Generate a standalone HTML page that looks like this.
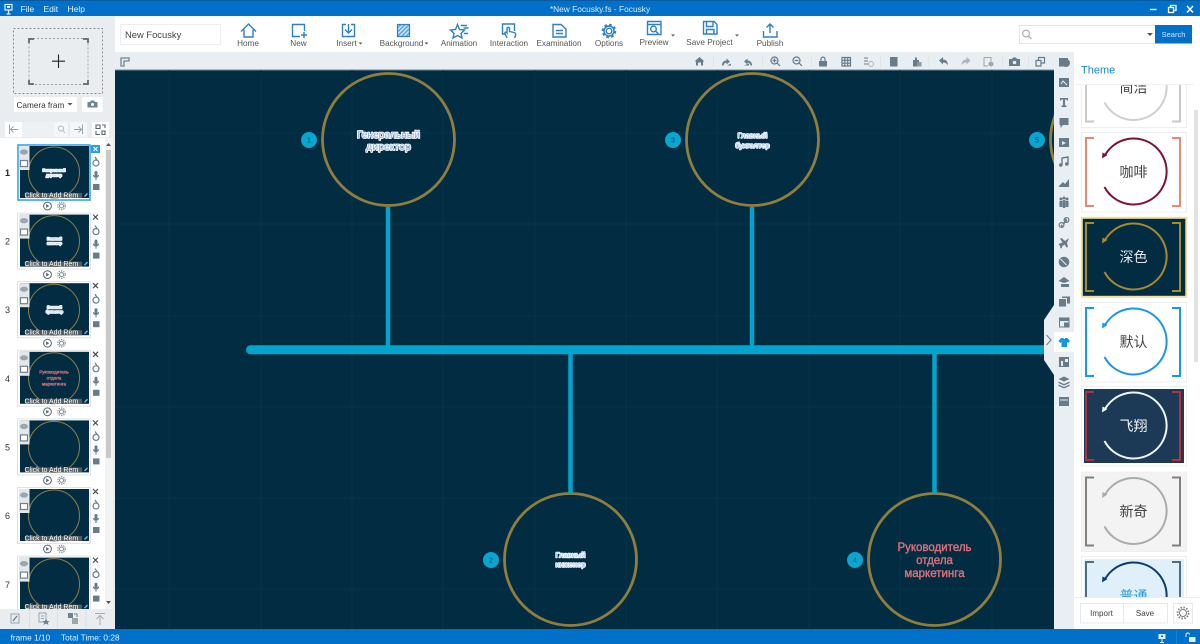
<!DOCTYPE html>
<html><head><meta charset="utf-8"><title>Focusky</title>
<style>
html,body{margin:0;padding:0;width:1200px;height:644px;overflow:hidden;background:#e9eef2}
svg{display:block;font-family:"Liberation Sans","Noto Sans CJK SC",sans-serif}
.tl{font-size:8.2px;fill:#555;text-anchor:middle}
.ti{fill:none;stroke:#2f80c6;stroke-width:1.4}
.g{fill:#677b88}
.gl{fill:#aab6be}
.gs{fill:none;stroke:#677b88;stroke-width:1.2}
.cam{fill:#fff;font-size:7px}
.hal{paint-order:stroke;stroke:#fff;stroke-width:1.8px;stroke-linejoin:round;fill:#86aade;text-anchor:middle}
.hals{paint-order:stroke;stroke:#fff;stroke-width:1.5px;stroke-linejoin:round;fill:#a8c4e8;text-anchor:middle}
.thal{paint-order:stroke;stroke:#fff;stroke-width:1.6px;stroke-linejoin:round;fill:#a8c4e8;text-anchor:middle;font-size:3.7px}
.ct{font-size:14px;text-anchor:middle;font-family:"Liberation Sans","Noto Sans CJK SC",sans-serif}
</style></head><body>
<svg width="1200" height="644" viewBox="0 0 1200 644" xmlns="http://www.w3.org/2000/svg">
<defs>
<pattern id="hatch" width="3" height="3" patternUnits="userSpaceOnUse" patternTransform="rotate(-45)"><rect width="3" height="3" fill="#cfe3f3"/><rect width="3" height="1.5" fill="#5fa5dc"/></pattern>
<clipPath id="listClip"><rect x="0" y="138" width="105" height="471"/></clipPath>
<clipPath id="panelClip"><rect x="1075" y="85" width="119" height="512"/></clipPath>
<clipPath id="canvasClip"><rect x="115" y="70" width="939" height="559"/></clipPath>
<g id="tb">
<rect x="17.500" y="144.500" width="73" height="56" fill="#fff" stroke="#e2e2e2"/>
<rect x="20" y="146" width="69" height="52" fill="#022c42"/>
<circle cx="54" cy="172.500" r="25.500" fill="none" stroke="#8d7f48" stroke-width="1"/>
<rect x="19" y="146" width="10.500" height="24" fill="#e3e7ea"/>
<ellipse cx="24" cy="152" rx="4" ry="2.600" fill="#98a6af"/>
<rect x="20.500" y="160.500" width="7" height="6" fill="#fff" stroke="#6f8290" stroke-width="1.200"/>
<rect x="25" y="193" width="57" height="5" fill="#555c60"/>
<path d="M84 196l3-3 1 1-3 3z" fill="#7fb7e0"/>
<path d="M93 146l5 5m0-5l-5 5" stroke="#444" stroke-width="1.100" fill="none"/>
<circle cx="96" cy="163" r="3" class="gs"/><path d="M95 157l2 3" class="gs"/>
<rect x="94.500" y="171" width="3" height="6" rx="1.500" class="g"/><path d="M93.500 175c0 3 5 3 5 0M96 178v2" class="gs"/>
<rect x="93" y="184" width="6.500" height="6" class="g"/>
<circle cx="47.500" cy="206" r="3.900" fill="none" stroke="#55666f" stroke-width="1"/><path d="M46.200 204v4l3-2z" fill="#55666f"/>
<circle cx="61.500" cy="206" r="2" fill="none" stroke="#7d8e98" stroke-width="1"/><circle cx="61.500" cy="206" r="3.700" fill="none" stroke="#7d8e98" stroke-width="1.200" stroke-dasharray="1.400 1"/>
</g>
<g id="br"><path d="M13 6H5V74H13M91 6H99V74H91" fill="none" stroke-width="2"/></g>
<g id="arc"><path d="M23.500 24A33 33 0 1 1 23.500 55" fill="none" stroke-width="2"/><path d="M21 26.500L21.500 20.500L26.500 23z" stroke="none"/></g>
</defs>

<!-- base -->
<rect width="1200" height="644" fill="#e9eef2"/>
<!-- title bar -->
<rect width="1200" height="16" fill="#0070c9"/>
<rect width="1200" height="1" fill="#0a5aa0"/>
<path d="M5 4.500H12V10H5zM8.500 10V14M6.500 14H10.500" fill="none" stroke="#e3f0fa" stroke-width="1.200"/>
<rect x="7" y="6" width="3" height="2" fill="#e3f0fa"/>
<text x="20.500" y="12" font-size="8.500" fill="#e8f3fb">File</text>
<text x="43.500" y="12" font-size="8.500" fill="#e8f3fb">Edit</text>
<text x="67.500" y="12" font-size="8.500" fill="#e8f3fb">Help</text>
<text x="600" y="12" font-size="8.400" fill="#dcebf7" text-anchor="middle">*New Focusky.fs - Focusky</text>
<path d="M1150 9.500H1156.500" stroke="#fff" stroke-width="1.400"/>
<path d="M1168.500 7.500h5v5h-5zM1170.500 7.500v-2h5.500v5h-2" fill="none" stroke="#fff" stroke-width="1.300"/>
<path d="M1187 6l6 6.500m0-6.500l-6 6.500" stroke="#fff" stroke-width="1.500" fill="none"/>

<!-- ribbon -->
<rect x="115" y="16" width="1085" height="36" fill="#fff"/>
<rect x="120.500" y="24.500" width="100" height="20" fill="#fff" stroke="#eceff1"/>
<text x="125" y="38" font-size="9.400" fill="#444">New Focusky</text>

<path class="ti" d="M241 31.500L248.500 24L256 31.500M244 29.500V37H253V29.500"/>
<text class="tl" x="248" y="46">Home</text>
<path class="ti" d="M304.500 31V24.500H292.500V36.500H300M301 35H307M304 32V38"/>
<text class="tl" x="298.500" y="46">New</text>
<path class="ti" d="M346 24.500H342.500V36.500H354.500V24.500H351M348.500 24V33M345 29.500L348.500 33L352 29.500"/>
<text class="tl" x="346.500" y="46">Insert</text><path d="M358.500 42.500h4l-2 2z" fill="#555"/>
<rect x="397.500" y="24.500" width="12" height="12" fill="url(#hatch)" stroke="#2f80c6" stroke-width="1.200"/>
<text class="tl" x="401.500" y="46">Background</text><path d="M424.500 42.500h4l-2 2z" fill="#555"/>
<path class="ti" d="M457.500 24.500L459.500 29.500L464.500 30L461 33.500L462 38L457.500 35.500L453 38L454 33.500L450.500 30L455.500 29.500zM461 25.500H467M463.500 28H468.500M464 33.500H468"/>
<text class="tl" x="459" y="46">Animation</text>
<path class="ti" d="M505 34H502.500V24H514.500V31M507 38L505 33.500C504.500 32 506 31.500 507 33V28.500C507 27 509.500 27 509.500 28.500V31.500L514 32.500C515.500 33 516 34 515.500 35.500L514.500 38"/>
<text class="tl" x="509" y="46">Interaction</text>
<path class="ti" d="M553 24.500H561L566 29V37H553zM556 30.500H563M556 33.500H563"/>
<text class="tl" x="559" y="46">Examination</text>
<circle class="ti" cx="609" cy="31" r="2.800"/><circle cx="609" cy="31" r="6" fill="none" stroke="#2f80c6" stroke-width="2.600" stroke-dasharray="2.500 2.200"/><circle cx="609" cy="31" r="5" class="ti" stroke-width="1"/>
<text class="tl" x="609" y="46">Options</text>
<path class="ti" d="M647.500 21.500H661V34.500H647.500zM647.500 24.500H661"/><circle class="ti" cx="653.500" cy="29" r="2.800"/><path class="ti" d="M655.500 31L658.500 34"/>
<text class="tl" x="654" y="45">Preview</text><path d="M671 34.500h4l-2 2z" fill="#555"/>
<path class="ti" d="M703.500 21.500H714L717 24.500V34H703.500zM706.500 21.500V26.500H713V21.500M706.500 34V29.500H714V34"/>
<text class="tl" x="709.500" y="45">Save Project</text><path d="M735 34.500h4l-2 2z" fill="#555"/>
<path class="ti" d="M770 33V24M766.500 27.500L770 24L773.500 27.500M763.500 31V37H777V31"/>
<text class="tl" x="770" y="46">Publish</text>

<!-- search -->
<rect x="1019.500" y="25.500" width="136" height="18" fill="#fff" stroke="#e2e5e8"/>
<circle cx="1026" cy="33.500" r="3.400" fill="none" stroke="#b0b0b0" stroke-width="1.200"/><path d="M1028.500 36L1031.500 39" stroke="#b0b0b0" stroke-width="1.400"/>
<path d="M1147 33h6l-3 3z" fill="#555"/>
<rect x="1155" y="25" width="37" height="18.500" fill="#0070c9"/>
<text x="1173.500" y="37" font-size="7.500" fill="#d6e8f6" text-anchor="middle">Search</text>

<!-- toolbar -->
<rect x="115" y="52" width="959" height="18" fill="#e9eef2"/>
<path d="M121 58H129V61H124V66H121z" fill="none" stroke="#71848f" stroke-width="1.300"/>
<path class="g" d="M699.500 57L704.500 61.500H703V65.500H701V62.500H698V65.500H696V61.500H694.500z"/>
<path class="g" d="M722 65.500C722 62 724 60.500 726.500 60.500V58.500L730 61.500L726.500 64.500V62.500C725 62.500 724 63.500 723.500 65.500zM727 65.500H731V63.500z"/>
<path class="g" d="M752 65.500C752 62 750 60.500 747.500 60.500V58.500L744 61.500L747.500 64.500V62.500C749 62.500 750 63.500 750.500 65.500zM744 65.500H749V63.500z"/>
<circle class="gs" cx="774.500" cy="60.500" r="3.500"/><path class="gs" d="M777 63L780 66M772.500 60.500H776.500M774.500 58.500V62.500"/>
<circle class="gs" cx="796.500" cy="60.500" r="3.500"/><path class="gs" d="M799 63L802 66M794.500 60.500H798.500"/>
<rect class="g" x="819" y="61" width="8" height="5.500" rx=".5"/><path class="gs" d="M821 61V59C821 56.500 825 56.500 825 59V61"/>
<path class="gs" d="M842 57.500H850.500V66H842zM842 60.300H850.500M842 63.200H850.500M844.800 57.500V66M847.700 57.500V66" stroke-width="1"/>
<path class="gl" d="M864 57h4v2h-4zM864 60h4v2h-4zM864 63h4v2h-4z"/><circle cx="871" cy="64" r="2.500" fill="none" stroke="#aab6be"/>
<path class="g" d="M890 57H897.500V66.500H890z"/>
<path class="g" d="M913 60H919V66.500H913zM915 57.500H917V60H915z"/><rect x="917" y="62" width="4.500" height="4.500" fill="#8b9ba5"/>
<path class="g" d="M939 60.500L943 57V59.500C946.500 59.500 948 62 948 65.500C947 63.500 945.500 62.500 943 62.500V64.500z"/>
<path class="gl" d="M970.500 60.500L966.500 57V59.500C963 59.500 961.500 62 961.500 65.500C962.500 63.500 964 62.500 966.500 62.500V64.500z"/>
<path fill="none" stroke="#9aa8b1" d="M984 57.500H991V61M984 57.500V66H988"/><circle cx="991" cy="64" r="2.500" fill="#9aa8b1"/>
<path class="g" d="M1009 59H1012L1013 57.500H1016L1017 59H1020V66H1009z"/><circle cx="1014.500" cy="62.500" r="1.800" fill="#e9eef2"/>
<path class="gs" d="M1036 60.500H1041V66H1036zM1038.500 60.500V57.500H1044.500V63H1041"/>
<path d="M713.500 55V67M762.500 55V67M811.500 55V67M880.500 55V67M929 55V67M1002.500 55V67M1028.500 55V67" stroke="#e0e5e9"/>

<!-- left panel -->
<rect x="0" y="16" width="115" height="613" fill="#e9edf0"/>
<rect x="13.500" y="28.500" width="89" height="65" fill="none" stroke="#8b8b8b" stroke-dasharray="2 2"/>
<rect x="29" y="38.500" width="59" height="46" fill="none" stroke="#a0a0a0" stroke-dasharray="2 2"/>
<path d="M29 43V39H34M83 39H88V43M88 80V84H83M34 84H29V80" fill="none" stroke="#666" stroke-width="1.800"/>
<path d="M58.500 54.500V68M52 61.200H65" stroke="#222" stroke-width="1.100"/>
<rect x="14" y="97" width="63" height="15" fill="#fff"/>
<text x="16.500" y="108" font-size="8.200" fill="#333">Camera fram</text>
<path d="M67.500 103h5l-2.500 2.500z" fill="#555"/>
<rect x="82" y="97" width="20.500" height="15" fill="#fff"/>
<path d="M87.500 102H90L91 100.500H94L95 102H97.500V107.500H87.500z" fill="#6c8493"/><circle cx="92.500" cy="104.500" r="1.500" fill="#fff"/>
<rect x="5" y="122" width="17" height="15" fill="#fff"/><rect x="22" y="122" width="32" height="15" fill="#eef1f3"/><rect x="54" y="122" width="14" height="15" fill="#f5f6f7"/><rect x="70" y="122" width="17" height="15" fill="#f5f6f7"/><rect x="92" y="122" width="17" height="15" fill="#fff"/>
<path d="M9.500 124.500V134M18 129.500H10.500M13.500 126.500L10.500 129.500L13.500 132.500" fill="none" stroke="#9aa5ac"/>
<circle cx="61" cy="128.500" r="2.500" fill="none" stroke="#b0b6bb"/><path d="M63 130.500L65 133" stroke="#b0b6bb"/>
<path d="M82.500 124.500V134M74 129.500H81.500M78.500 126.500L81.500 129.500L78.500 132.500" fill="none" stroke="#9aa5ac"/>
<path d="M96 125H100V128.500H96zM102 125H105V128M96 131V134.500H100M102 131H105V134.500H102z" fill="none" stroke="#55666f" stroke-width="1.100"/>

<!-- thumbnails list -->
<rect x="0" y="138" width="113" height="471" fill="#fff"/>
<rect x="105" y="138" width="8" height="471" fill="#f2f3f4"/>
<rect x="106" y="150" width="5" height="308" fill="#c9c9c9"/>
<path d="M106 146l2.500-3 2.500 3z" fill="#555"/><path d="M106 601l2.500 3 2.500-3z" fill="#555"/>
<g clip-path="url(#listClip)">
<use href="#tb"/>
<rect x="18" y="145" width="72" height="55" fill="none" stroke="#3aa8ee" stroke-width="1.600"/>
<rect x="91" y="145" width="9" height="8" fill="#2b9bea"/><path d="M93.500 147l4 4m0-4l-4 4" stroke="#fff" stroke-width="1.100"/>
<text class="thal" x="54" y="171.500">Генеральный</text><text class="thal" x="54" y="176.500">директор</text>
<text class="cam" x="24.500" y="197.500">Click to Add Rem</text>
<text x="5" y="176" font-size="9" font-weight="bold" fill="#222">1</text>

<use href="#tb" y="68.600"/>
<text class="thal" x="54.500" y="240">Главный</text><text class="thal" x="54.500" y="244.500">инженер</text>
<text class="cam" x="24.500" y="266">Click to Add Rem</text>
<text x="5" y="244.500" font-size="9" fill="#333">2</text>

<use href="#tb" y="137.200"/>
<text class="thal" x="54.500" y="308.500">Главный</text><text class="thal" x="54.500" y="313">бухгалтер</text>
<text class="cam" x="24.500" y="334.700">Click to Add Rem</text>
<text x="5" y="313" font-size="9" fill="#333">3</text>

<use href="#tb" y="205.800"/>
<g font-size="4.600" fill="#e0707c" stroke="#e0707c" stroke-width=".3" text-anchor="middle"><text x="54" y="373.500">Руководитель</text><text x="54" y="379.500">отдела</text><text x="54" y="385.500">маркетинга</text></g>
<text class="cam" x="24.500" y="403.300">Click to Add Rem</text>
<text x="5" y="382" font-size="9" fill="#333">4</text>

<use href="#tb" y="274.400"/>
<text class="cam" x="24.500" y="471.900">Click to Add Rem</text>
<text x="5" y="450.500" font-size="9" fill="#333">5</text>

<use href="#tb" y="343"/>
<text class="cam" x="24.500" y="540.500">Click to Add Rem</text>
<text x="5" y="519" font-size="9" fill="#333">6</text>

<use href="#tb" y="411.600"/>
<text class="cam" x="24.500" y="609">Click to Add Rem</text>
<text x="5" y="588" font-size="9" fill="#333">7</text>
</g>
<!-- left bottom bar -->
<rect x="0" y="609" width="115" height="20" fill="#e9edf0"/>
<path d="M29.500 609V629M57.500 609V629M86 609V629" stroke="#dadfe3"/>
<path d="M11 614H19V623H11z" fill="none" stroke="#9aa5ac"/><path d="M13 621L17 616" stroke="#677b88" stroke-width="1.300"/>
<path d="M39 613H46V622H39z" fill="none" stroke="#9aa5ac"/><path d="M41 616H44M41 618.500H44" stroke="#9aa5ac"/><path d="M46 618.500L47.200 621H49.500L47.800 622.600 48.500 625 46 623.600 43.500 625 44.200 622.600 42.500 621H44.800z" fill="#6f8290"/>
<rect x="68" y="613" width="5" height="5" fill="#6f8290"/><rect x="72" y="618" width="6" height="6" fill="#9aa5ac"/><path d="M74 614h3v3" fill="none" stroke="#6f8290"/>
<path d="M95 613.500H105M100 625V615M96.500 619L100 615.500L103.500 619" fill="none" stroke="#a3adb4"/>

<!-- canvas -->
<rect x="115" y="70" width="939" height="559" fill="#022c42"/>
<rect x="115" y="69.500" width="939" height="1" fill="#6c8997"/>
<g clip-path="url(#canvasClip)">
<path stroke="#06344a" stroke-width="1" d="M169 70V629M261 70V629M352 70V629M443 70V629M535 70V629M626 70V629M717 70V629M809 70V629M900 70V629M992 70V629M115 133H1054M115 224H1054M115 316H1054M115 407H1054M115 498H1054M115 589H1054"/>
<g fill="none" stroke="#8f7e3e" stroke-width="2.800">
<circle cx="388.500" cy="139.500" r="66"/><circle cx="752.500" cy="139.500" r="66"/><circle cx="1116.500" cy="139.500" r="66"/>
<circle cx="570.500" cy="559.500" r="66"/><circle cx="934.500" cy="559.500" r="66"/>
</g>
<path d="M388 207V350M752 207V350M570.500 350V493M934.500 350V493" stroke="#00a4cc" stroke-width="4.500"/>
<path d="M250.500 349.800H1060" stroke="#00a4cc" stroke-width="9" stroke-linecap="round"/>
<g fill="#0aa6d0"><circle cx="309" cy="140" r="8"/><circle cx="673" cy="140" r="8"/><circle cx="1037" cy="140" r="8"/><circle cx="491" cy="560" r="8"/><circle cx="855" cy="560" r="8"/></g>
<g font-size="7" fill="#0b4a66" text-anchor="middle"><text x="309" y="142.500">1</text><text x="673" y="142.500">3</text><text x="1037" y="142.500">5</text><text x="491" y="562.500">2</text><text x="855" y="562.500">4</text></g>
<text class="hal" x="388.500" y="138" font-size="10.500" textLength="63">Генеральный</text>
<text class="hal" x="388.500" y="150" font-size="10.500">директор</text>
<text class="hals" x="752.500" y="138" font-size="7.500">Главный</text>
<text class="hals" x="752.500" y="148" font-size="7.500">бухгалтер</text>
<text class="hals" x="570.500" y="557.500" font-size="7.500">Главный</text>
<text class="hals" x="570.500" y="567" font-size="7.500">инженер</text>
<g font-size="11.500" fill="#d9707a" text-anchor="middle" stroke="#d9707a" stroke-width=".4">
<text x="934.500" y="551">Руководитель</text><text x="934.500" y="564">отдела</text><text x="934.500" y="577">маркетинга</text></g>
</g>

<!-- right icon column -->
<rect x="1054" y="52" width="20" height="577" fill="#e9eef2"/>
<path d="M1054 305L1044 320V360L1054 375z" fill="#e9eef2"/>
<path d="M1046.500 335L1051 340L1046.500 345" fill="none" stroke="#6b7a84"/>
<rect x="1054" y="332" width="20" height="20" fill="#fff"/>
<g fill="#677b88">
<rect x="1059" y="58" width="9" height="8.500"/><circle cx="1066" cy="63" r="4"/>
<path d="M1059 78H1069V87H1059z"/>
<path d="M1060 98H1068V100.500H1067L1066.500 99.500H1065V105.500H1066.500V107H1061.500V105.500H1063V99.500H1061.500L1061 100.500H1060z"/>
<path d="M1059.500 118H1068.500V125H1063L1060.500 128V125H1059.500z"/>
<path d="M1059 138H1069V147H1059z"/>
<path d="M1062 165V158L1068 157V164" fill="none" stroke="#677b88" stroke-width="1.400"/><circle cx="1060.800" cy="165" r="1.800"/><circle cx="1066.800" cy="164" r="1.800"/>
<path d="M1059 186L1063 182L1065 184L1069 179V187H1059z"/>
<circle cx="1061" cy="199" r="1.500"/><circle cx="1064" cy="198" r="1.500"/><circle cx="1067" cy="199" r="1.500"/><path d="M1059.500 201H1062.500V207H1059.500zM1062.800 200H1065.300V208H1062.800zM1065.500 201H1068.500V207H1065.500z"/>
<path d="M1061 225L1063 227M1065 219L1067 221M1063 224L1066 221" fill="none" stroke="#677b88" stroke-width="1.600"/><circle cx="1061.500" cy="225" r="2.400" fill="none" stroke="#677b88" stroke-width="1.200"/><circle cx="1066.500" cy="220" r="2.400" fill="none" stroke="#677b88" stroke-width="1.200"/>
<path d="M1069 238L1067 243L1068 247L1066.500 247.500L1064.500 244.500L1062 246.500V248L1060.500 248.500L1060 246L1058.500 244L1062.500 242.500L1060 238.500L1061.500 238L1065 241z"/>
<circle cx="1064" cy="262" r="5.300"/>
<path d="M1058.500 281L1064 277L1069.500 281L1064 283zM1061 284H1069V287H1061z"/>
<path d="M1059 299H1066V306.500H1059zM1062 296.500H1070V303.500H1067V298H1062z"/>
<path d="M1059 318H1069V321H1059z"/><path d="M1059.500 318H1069V327H1059.500z" fill="none" stroke="#677b88"/><rect x="1064" y="322.500" width="5.500" height="4.500"/>
<path d="M1061 338L1063.500 338C1063.500 339.500 1065 339.500 1065 338L1067.500 338L1070 341L1068 343L1067 342V347H1061.500V342L1060.500 343L1058.500 341z" fill="#1296e6"/>
<path d="M1059 357H1069V367H1059z"/>
<path d="M1064 376.500L1069.500 379L1064 381.500L1058.500 379zM1058.500 381.500L1064 384L1069.500 381.500V383L1064 385.500L1058.500 383zM1058.500 384.500L1064 387L1069.500 384.500V386L1064 388.500L1058.500 386z"/>
<path d="M1059 397H1069V406H1059z"/>
</g>
<path d="M1060.500 259L1066.500 265" stroke="#e9eef2"/><path d="M1061 361H1063V366H1061zM1065 359H1068V362H1065z" fill="#e9eef2"/>
<path d="M1061 84L1063 81L1067 85" stroke="#e9eef2" fill="none"/><path d="M1062 141V145L1066 143z" fill="#e9eef2"/>
<path d="M1060 400H1068" stroke="#e9eef2"/>

<!-- right panel -->
<rect x="1074" y="52" width="126" height="577" fill="#fff"/>
<text x="1081" y="73.500" font-size="11" fill="#1a86d0">Theme</text>
<path d="M1075 84.500H1194" stroke="#eef0f1"/>
<rect x="1194" y="110" width="4" height="252" fill="#e2e2e2"/>
<g clip-path="url(#panelClip)">
<!-- 1 -->
<g transform="translate(1081 47.500)"><rect x=".5" y=".5" width="105" height="79.500" fill="#fff" stroke="#edf0f2"/><use href="#br" stroke="#c9c9c9"/><use href="#arc" stroke="#cfcfcf" fill="#cfcfcf"/><text class="ct" x="52.500" y="45" fill="#444">简洁</text></g>
<!-- 2 -->
<g transform="translate(1081 132)"><rect x=".5" y=".5" width="105" height="79.500" fill="#fff" stroke="#edf0f2"/><use href="#br" stroke="#e28a78"/><use href="#arc" stroke="#7a1230" fill="#7a1230"/><text class="ct" x="52.500" y="45" fill="#444">咖啡</text></g>
<!-- 3 -->
<g transform="translate(1081 217)"><rect x=".8" y=".8" width="104.500" height="79" fill="#022c42" stroke="#f3e19b" stroke-width="2"/><use href="#br" stroke="#a68a30"/><use href="#arc" stroke="#a68a30" fill="#a68a30"/><text class="ct" x="52.500" y="45" fill="#e3e8ea">深色</text></g>
<!-- 4 -->
<g transform="translate(1081 302)"><rect x=".5" y=".5" width="105" height="79.500" fill="#fff" stroke="#edf0f2"/><use href="#br" stroke="#1a96f0"/><use href="#arc" stroke="#1a96f0" fill="#1a96f0"/><text class="ct" x="52.500" y="45" fill="#444">默认</text></g>
<!-- 5 -->
<g transform="translate(1081 386)"><rect x=".5" y=".5" width="105" height="79.500" fill="#fff" stroke="#edf0f2"/><rect x="3" y="3" width="100" height="74" fill="#1c3a55"/><use href="#br" stroke="#b4303f"/><use href="#arc" stroke="#f2f4f6" fill="#f2f4f6"/><text class="ct" x="52.500" y="45" fill="#f2f4f6">飞翔</text></g>
<!-- 6 -->
<g transform="translate(1081 471.500)"><rect x=".5" y=".5" width="105" height="79.500" fill="#f3f3f3" stroke="#edf0f2"/><use href="#br" stroke="#808080"/><use href="#arc" stroke="#ababab" fill="#ababab"/><text class="ct" x="52.500" y="45" fill="#444">新奇</text></g>
<!-- 7 -->
<g transform="translate(1081 556)"><rect x=".5" y=".5" width="105" height="79.500" fill="#fff" stroke="#edf0f2"/><rect x="3" y="3" width="100" height="74" fill="#dff0fa"/><use href="#br" stroke="#4f6f7c"/><use href="#arc" stroke="#0a3d6e" fill="#0a3d6e"/><text class="ct" x="52.500" y="45" fill="#2a9ad0">普通</text></g>
</g>
<rect x="1074" y="597" width="126" height="32" fill="#fff"/>
<path d="M1074 597.500H1200" stroke="#eceff1"/>
<rect x="1080.500" y="603.500" width="87" height="19.500" fill="#fff" stroke="#e6e9eb"/>
<path d="M1123.500 604V623" stroke="#e6e9eb"/>
<text x="1101.500" y="616" font-size="8" fill="#444" text-anchor="middle">Import</text>
<text x="1145" y="616" font-size="8" fill="#444" text-anchor="middle">Save</text>
<rect x="1173.500" y="603.500" width="19" height="19.500" fill="#fff" stroke="#e6e9eb"/>
<circle cx="1183" cy="613" r="3.500" fill="none" stroke="#7f7f7f" stroke-width="1"/><circle cx="1183" cy="613" r="5.500" fill="none" stroke="#7f7f7f" stroke-width="1.800" stroke-dasharray="1.500 1.400"/>

<!-- status bar -->
<rect x="0" y="629" width="1200" height="15" fill="#0070c9"/>
<text x="10.500" y="640.500" font-size="8.300" fill="#e3f0fa">frame 1/10</text>
<text x="61" y="640.500" font-size="8.300" fill="#e3f0fa">Total Time: 0:28</text>
<path d="M1158.500 634H1165.500V639H1158.500z" fill="#e3f0fa"/><path d="M1162 639V642M1160 642.500H1164" stroke="#e3f0fa"/><path d="M1161 635.500H1163V637H1161z" fill="#0070c9"/>
<path d="M1176.500 630V644" stroke="#1a80d0"/>
<rect x="1189" y="637" width="6.500" height="5" fill="#e3f0fa"/><path d="M1186 637V634.500C1186 632.500 1189.500 632.500 1189.500 634.500" fill="none" stroke="#e3f0fa"/>
</svg>
</body></html>
